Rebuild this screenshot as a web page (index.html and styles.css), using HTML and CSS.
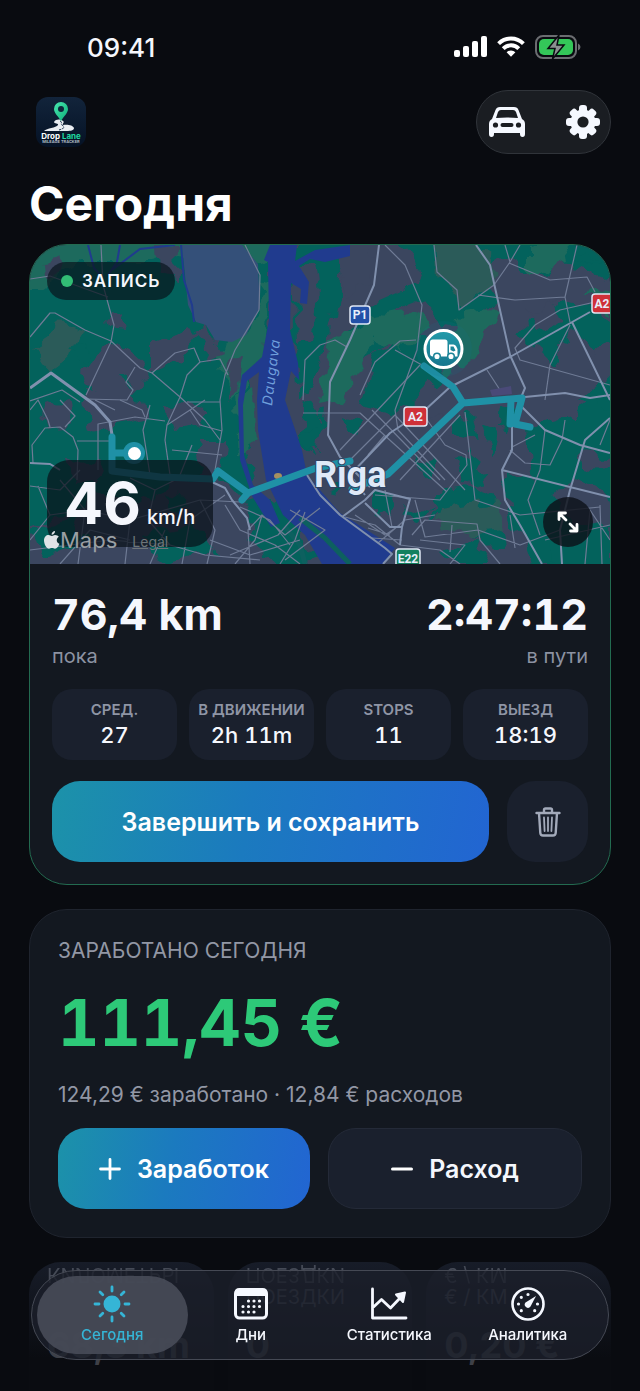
FILE: index.html
```
<!DOCTYPE html>
<html lang="ru">
<head>
    <meta charset="UTF-8">
    <meta name="viewport" content="width=device-width, initial-scale=1">
    <title>Drop Lane</title>
    <link rel="stylesheet" href="styles.css">
</head>
<body>
<div class="page">
    <!-- status bar -->
    <div class="status">
        <span class="status-time">09:41</span>
        <span class="status-icons">
            <svg width="33" height="22" viewBox="0 0 33 22" fill="#fff"><rect x="0" y="14" width="6" height="7" rx="2"/><rect x="9" y="10" width="6" height="11" rx="2"/><rect x="18" y="5" width="6" height="16" rx="2"/><rect x="27" y="0" width="6" height="21" rx="2"/></svg>
            <svg width="28" height="22" viewBox="0 0 28 22"><g fill="none" stroke="#fff" stroke-width="4"><path d="M1.6 7.6a17.6 17.6 0 0 1 24.8 0"/><path d="M6.2 12.6a11 11 0 0 1 15.6 0"/></g><path d="M9.6 16.2a6.3 6.3 0 0 1 8.8 0L14 20.8z" fill="#fff"/></svg>
            <svg width="46" height="24" viewBox="0 0 46 24"><rect x="1" y="1" width="40" height="22" rx="7" fill="none" stroke="#6b6d71" stroke-width="2"/><rect x="4" y="4" width="34" height="16" rx="5" fill="#34c759"/><path d="M43 8.500q2.500 1 2.500 3.500t-2.500 3.500z" fill="#6b6d71"/><path d="M24 0 13 13.500h7L17.500 24 29 10h-7z" fill="#8b8f90" stroke="#090b10" stroke-width="1.500"/></svg>
        </span>
    </div>

    <div class="topbar">
        <svg class="logo" viewBox="0 0 50 50" role="img" aria-label="Drop Lane">
            <defs>
                <linearGradient id="logoBg" x1="0" y1="0" x2="0" y2="1"><stop offset="0" stop-color="#12243b"/><stop offset="1" stop-color="#051225"/></linearGradient>
                <linearGradient id="pin" x1="0" y1="0" x2="1" y2="1"><stop offset="0" stop-color="#49e8b0"/><stop offset="1" stop-color="#0cae78"/></linearGradient>
            </defs>
            <rect width="50" height="50" rx="12" fill="url(#logoBg)"/>
            <path d="M18 25c2-3 6-3 9-1 2 1-1 3 0 4 4-1 10 0 11 3 0 3-5 3-9 3H8c3-3 12-3 14-6 1-2-4-1-4-3z" fill="#e9edf2"/>
            <path d="M24 24c3 1 0 3 2 4 3 2 3 3-3 5" fill="none" stroke="#17304a" stroke-width="1" stroke-dasharray="3 1"/>
            <path d="M25 5a7 7 0 0 1 7 7c0 4-4 7-7 12-3-5-7-8-7-12a7 7 0 0 1 7-7z" fill="url(#pin)"/>
            <circle cx="25" cy="12" r="3" fill="#0f263b"/>
            <text x="25" y="42" class="logo-name">Drop <tspan fill="#1fd7a0">Lane</tspan></text>
            <text x="25" y="46" class="logo-sub">MILEAGE TRACKER</text>
        </svg>
        <div class="top-actions">
            <button type="button" aria-label="Автомобиль">
                <svg width="40" height="32" viewBox="0 0 40 32"><path d="M5 13 8.500 4Q9.500 1 13 1h14q3.500 0 4.500 3L35 13q3 1.500 3 5v10q0 3-2.500 3T33 28v-1H7v1q0 3-2.500 3T2 28V18q0-3.500 3-5z" fill="#f5f8ff"/><path d="M9 12 11 6q.8-2 3-2h12q2.200 0 3 2l2 6q-11-1-22 0z" fill="#1a1d22"/><circle cx="8.500" cy="19" r="2.600" fill="#1a1d22"/><circle cx="31.500" cy="19" r="2.600" fill="#1a1d22"/><rect x="13.500" y="17" width="13" height="4" rx="2" fill="#1a1d22"/></svg>
            </button>
            <button type="button" aria-label="Настройки">
                <svg width="34" height="34" viewBox="-17 -17 34 34"><g fill="#f5f8ff"><circle r="12.500"/><rect x="-4" y="-17" width="8" height="34" rx="3"/><rect x="-17" y="-4" width="34" height="8" rx="3"/><g transform="rotate(45)"><rect x="-4" y="-16.500" width="8" height="33" rx="3"/><rect x="-16.500" y="-4" width="33" height="8" rx="3"/></g></g><circle r="5.600" fill="#1a1d22"/></svg>
            </button>
        </div>
    </div>

    <h1 class="title">Сегодня</h1>

    <!-- current trip -->
    <section class="card trip">
        <div class="map">
            <svg class="map-canvas" viewBox="30 245 580 319" preserveAspectRatio="xMidYMid slice">
                <defs>
                    <filter id="rough" x="-5%" y="-5%" width="110%" height="110%" color-interpolation-filters="sRGB"><feTurbulence type="fractalNoise" baseFrequency="0.06" numOctaves="2" seed="4"/><feDisplacementMap in="SourceGraphic" scale="24" xChannelSelector="R" yChannelSelector="G"/></filter>
                    <linearGradient id="badge" x1="0" y1="0" x2="0" y2="1"><stop offset="0" stop-color="#239baa"/><stop offset="1" stop-color="#17748c"/></linearGradient>
                </defs>
                <rect x="30" y="245" width="580" height="319" fill="#3b465f"/>

                <!-- parks and woods -->
                <g filter="url(#rough)">
                    <path fill="#03625c" d="M10 225H276L270 330 262 350 250 375 245 430 255 480 240 500 210 470 170 485 140 505 100 490 60 520 10 530z"/>
                    <path fill="#03625c" d="M293 225H345L338 300 328 345 312 380 300 400 294 340zM385 225H635V262L600 280 590 268 560 262 540 278 515 262 500 252 480 268 495 300 470 330 440 322 420 300 395 310 380 350 345 370 330 362 350 325 375 302 420 282 415 262z"/>
                    <path fill="#03625c" d="M378 352 420 330 445 372 410 405 395 412 360 405zM560 300 600 310 615 340 590 350 575 330 540 352 515 335zM575 415 615 380V500L580 480 545 500 530 470 525 430zM500 470 545 485 570 520 575 564H530L515 520z"/>
                    <path fill="#03625c" d="M455 455 475 450 485 490 465 480zM410 455 440 465 430 480zM340 420 365 425 355 438zM435 490 470 485 500 505 505 550 480 545 460 515 430 520zM305 400 320 420 312 450 300 440zM375 495 395 490 392 518 375 510z"/>
                    <path fill="#03625c" d="M402 505 430 512 415 525zM550 535 610 520V580H555zM445 552 475 540 490 564H455zM300 440 325 410 320 450zM245 500 275 495 320 560 280 575 255 540zM30 530 70 520 85 540 40 560zM140 535 200 525 215 550 160 562zM450 420 470 415 475 440 455 435z"/>
                    <path fill="#1d6a5d" d="M20 235H275L276 256 252 262 180 255 150 262 80 262 40 290 20 290zM263 280 270 285 264 365 230 400 215 355 250 330zM330 340 370 318 410 310 430 325 400 350 375 340 345 400 320 405zM530 245 565 240 570 262 530 275zM455 315 500 310 485 330 475 360 440 380zM236 395 255 385 260 440 240 455zM585 295 610 285V315z"/>
                    <path fill="#2b5b59" d="M434 240 475 240 492 265 494 285 460 310 455 290 436 272zM32 350 62 325 85 330 75 350 48 370zM440 510 500 500 505 530 470 535 435 525z"/>
                    <path fill="#3b465f" d="M156 245H178L177 278 160 275zM45 265 58 258 62 275 46 278zM150 345 185 330 200 335 178 360 150 370zM195 330 205 325 222 355 210 360zM105 312 122 308 125 330 108 328zM92 355 118 342 152 372 125 400 90 395 82 372zM228 360 243 355 240 385 225 400zM40 405 70 400 75 425 50 430zM84 395 145 400 150 420 90 430zM165 405 205 408 205 425 170 430zM195 440 225 440 220 470 205 475zM70 460 105 455 100 480 75 482z"/>
                    <path fill="#3b465f" d="M295 270 315 262 320 300 310 335 298 345zM335 245 372 245 370 285 345 300zM430 418 460 415 450 440zM530 310 552 300 560 325 540 330zM590 350 610 350V372H592zM580 450 610 455 605 470 582 468z"/>
                    <path fill="#03625c" d="M70 350 90 345 85 360zM120 378 133 376 128 390zM500 405 515 410 512 430 498 425zM482 425 495 430 490 460zM545 330 562 345 555 365 540 350zM575 400 600 380 610 405zM575 260 590 250 600 265zM330 482 345 480 340 495zM60 495 95 490 88 510 62 512zM165 495 190 500 180 515z"/>
                </g>

                <!-- water -->
                <path d="M182 245H242L258 264 260 308 246 335 232 342 215 340 206 325 196 322 188 305z" fill="#345079"/>
                <path d="M181 245 184 280 192 305 194 322M88 245 94 268 103 278M120 245 117 262 108 275M175 245 140 249 112 270" fill="none" stroke="#203b8e" stroke-width="2"/>
                <path d="M270 245H297L295 261 315 250 350 245V256L325 262 310 259 299 266 309 282 307 304 300 303 301 289 291 283 290 330 298 363 299 380 291 371 285 400 302 450 307 475 340 513 395 548 383 564H322L305 535 283 515 266 480 258 430 257 400 259 372 247 381 243 405 244 455 253 485 270 500 280 523 271 527 252 496 240 460 238 400 242 375 262 357 269 320 268 262 264 260z" fill="#203b8e"/>
                <path d="M300 518 325 538 350 564M285 527 300 545 305 564" fill="none" stroke="#0d605f" stroke-width="5"/>
                <ellipse cx="278" cy="476" rx="4" ry="3" fill="#a58f60"/>

                <!-- streets -->
                <g fill="none" stroke="#6f7b95" stroke-width="1.200" stroke-linejoin="round">
                    <path d="M30 279 50 276 108 297M101 245 103 285 114 325 111 342 86 395M30 337 50 313 55 313 85 330 111 341 140 368 152 373 180 397 205 420 220 440M152 373 175 353 194 348 200 362 220 359 228 375M135 367 126 382 133 390 127 400 85 399M245 245 260 275 259 310 235 350 225 375 220 400 222 430 215 470M200 362 187 375 180 397 167 425 165 440 170 475M187 402H220"/>
                    <path d="M30 410 38 400 48 420 50 427M33 463 32 445 45 428 60 427 73 437 78 450 77 480M77 441H110M60 400 75 416 65 427M98 470V424L135 417 165 421M30 401 62 390 80 402M95 400 115 410M120 400 142 410 145 417M167 425 190 410 205 400M190 410 200 425 222 431M172 450 222 455M180 475 192 445M150 405 143 430 150 475"/>
                    <path d="M30 486 60 490 80 470M38 486 50 515 30 540M60 480 85 510 130 520 200 500 240 502M85 510 78 564M50 515 85 510M130 520 125 564M130 478 155 490 185 475M155 490 148 520 170 545 205 555 260 560M200 500 215 530 207 564M30 550 110 540 170 545M60 564 90 530 130 540M182 564 190 520 225 495M150 564 165 530"/>
                    <path d="M225 505 240 530 275 545 300 564M240 507 270 520 290 545M250 564 248 530 262 515 285 535 320 508M300 510 278 535 230 555M305 512 295 540 280 564M210 540 250 555 300 540M262 515 255 540 235 564M290 510 325 530 285 560"/>
                    <path d="M385 245 405 265 422 305 417 350 395 410M434 245 437 272 457 290 459 310 494 285 510 262 520 245M505 245 510 262M478 295 515 300 565 297 577 245M509 263 550 280 587 277 595 292M565 297 570 322M595 302 560 310 535 325 515 348 520 360 610 385M570 325 550 365 545 400M320 345 335 340 347 347M416 340 400 341 375 362 360 395M395 350 422 365M487 370 500 390M303 400 305 360 320 345"/>
                    <path d="M303 413H360L447 492M340 450 420 365M345 465 395 415 465 490M372 410 440 480M385 435 368 455M395 410 398 430 445 480M400 480 460 415M420 410 445 445 466 455 467 465 440 500 375 495M465 412 475 500 520 515 600 507M510 450 525 463 550 465 562 440 565 420M512 447 535 435M545 430 540 470 528 500 540 535M600 445 610 420"/>
                    <path d="M385 490 392 527M415 500 425 537 478 530 520 545 560 530M412 535 425 520 477 524 480 540 500 564M345 517 375 525 400 545 440 550 460 564M355 515 385 535 400 525M368 528 390 535M372 538 402 540M378 543 405 520 435 515M452 525 450 552M420 540 465 545 450 564M585 564 590 510 610 540M600 505 602 564M545 540 610 525M510 515 515 548"/>
                </g>
                <g fill="none" stroke="#8090ad" stroke-width="2" stroke-linejoin="round">
                    <path d="M379 245 374 285 350 340 330 382 328 435 340 457 370 487M590 312 510 357 450 387 425 410 390 433 350 475M476 245 490 265 510 355 525 388 520 400M525 397 565 393 590 398 610 395M572 322 610 400M520 405 545 430 580 445 610 453M610 418 585 440 570 490 560 530 562 564M512 420V450L502 470 505 500 520 525 542 564M502 470 610 497"/>
                    <path d="M307 475 320 495 340 515 385 548 392 554 383 564M342 517 365 500 375 490 410 499 402 527 400 545M365 503 390 527H402M30 463 50 464 60 470M212 482 225 488 232 500 247 518 250 530M350 475 365 495"/>
                    <path d="M30 388 51 373 95 405 110 422 112 435" stroke-width="3"/>
                </g>
                <path d="M490 390 511 386 512 394 492 396z" fill="#4a4a78"/>

                <!-- route -->
                <path d="M134 453H112V437M112 453V471L160 477 213 479 218 471 248 493 242 500M248 493 316 468 350 461M352 489 388 474 463 403 522 398 515 424 530 427M511 400 510 424M463 403 453 387 424 366" fill="none" stroke="#1f91a6" stroke-width="7" stroke-linecap="round" stroke-linejoin="round"/>
                <circle cx="134" cy="453" r="11" fill="#1f91a6"/><circle cx="134.500" cy="453.500" r="6.500" fill="#fff"/>

                <!-- road signs -->
                <g stroke="#dfe7f5" stroke-width="1.500">
                    <rect x="350" y="306" width="20" height="18" rx="3" fill="#2350a8"/>
                    <rect x="592" y="294" width="26" height="19" rx="3" fill="#cf3038"/>
                    <rect x="404" y="407" width="23" height="19" rx="3" fill="#cf3038"/>
                    <rect x="396" y="549" width="24" height="19" rx="3" fill="#14805f"/>
                </g>
                <g class="sign"><text x="360" y="319">P1</text><text x="602" y="308">A2</text><text x="415.500" y="421">A2</text><text x="408" y="563">E22</text></g>
                <text class="river" transform="translate(272 406) rotate(-83)">Daugava</text>
                <text class="city" x="314" y="487">Riga</text>

                <!-- truck -->
                <circle cx="444" cy="349" r="28" fill="#17748c" opacity=".15"/>
                <circle cx="443.500" cy="349" r="18.500" fill="url(#badge)" stroke="#fff" stroke-width="3"/>
                <path d="M430 342q0-2.500 2.500-2.500H445q2.500 0 2.500 2.500v14.500H433q-3 0-3-3zM449 344.500h4.500q1.500 0 2.500 1.500l1.500 3v7.500H449z" fill="#fff"/>
                <path d="M450.500 346.500h3l2 4-2 1-3-1.500z" fill="#1c8599"/>
                <circle cx="437" cy="356.500" r="3.300" fill="#fff" stroke="#1c8599" stroke-width="1.500"/><circle cx="451" cy="356.500" r="3.300" fill="#fff" stroke="#1c8599" stroke-width="1.500"/>
            </svg>
            <div class="rec"><i></i>ЗАПИСЬ</div>
            <div class="speed"><b>46</b><span>km/h</span></div>
            <div class="credit">
                <svg width="16" height="18" viewBox="0 0 16 18"><path d="M11 4c1.800 0 3 .8 3.800 1.800-3 1.800-2.600 5.800.6 7-1 2.600-2.600 5-4.400 5-1.200 0-1.600-.7-3-.7s-1.900.7-3 .7C2.500 17.800 0 13 0 9.500 0 6 2.200 4 4.500 4c1.400 0 2.500.9 3.400.9S9.700 4 11 4zM11 0c.2 2-1.500 3.800-3.400 3.700C7.400 1.800 9.200.1 11 0z" fill="#dfe3e6"/></svg><span>Maps</span><a href="#legal">Legal</a>
            </div>
            <button class="expand" type="button" aria-label="Развернуть карту">
                <svg width="22" height="22" viewBox="0 0 22 22" fill="none" stroke="#fff" stroke-width="2.800" stroke-linecap="round" stroke-linejoin="round"><path d="M2 8.500V2h6.500M2.500 2.500 9 9M20 13.500V20h-6.500M19.500 19.500 13 13"/></svg>
            </button>
        </div>
        <div class="trip-body">
            <div class="totals">
                <div><strong>76,4 km</strong><span>пока</span></div>
                <div class="right"><strong>2:47:12</strong><span>в пути</span></div>
            </div>
            <div class="chips">
                <div class="chip"><span>СРЕД.</span><b>27</b></div>
                <div class="chip"><span>В ДВИЖЕНИИ</span><b>2h 11m</b></div>
                <div class="chip"><span>STOPS</span><b>11</b></div>
                <div class="chip"><span>ВЫЕЗД</span><b>18:19</b></div>
            </div>
            <div class="actions">
                <button class="btn btn-primary" type="button">Завершить и сохранить</button>
                <button class="btn btn-trash" type="button" aria-label="Удалить">
                    <svg width="26" height="30" viewBox="0 0 26 30" fill="none" stroke="#a3aaba" stroke-width="2.400" stroke-linecap="round" stroke-linejoin="round"><path d="M1.500 6h23M9 6V3q0-1.500 1.500-1.500h5Q17 1.500 17 3v3M4 6l1.300 20q.2 2.500 2.700 2.500h10q2.500 0 2.700-2.500L22 6"/><path d="M9 10.500 9.600 24M13 10.500V24M17 10.500 16.400 24" stroke-width="1.800"/></svg>
                </button>
            </div>
        </div>
    </section>

    <!-- money -->
    <section class="card earn">
        <h2>ЗАРАБОТАНО СЕГОДНЯ</h2>
        <p class="amount">111,45 €</p>
        <p class="detail">124,29 € заработано · 12,84 € расходов</p>
        <div class="earn-actions">
            <button class="btn btn-primary" type="button"><svg width="22" height="22" viewBox="0 0 22 22" stroke="#fff" stroke-width="2.800" stroke-linecap="round"><path d="M11 1.500v19M1.500 11h19"/></svg>Заработок</button>
            <button class="btn btn-dark" type="button"><svg width="22" height="22" viewBox="0 0 22 22" stroke="#fff" stroke-width="3" stroke-linecap="round"><path d="M1.500 11h19"/></svg>Расход</button>
        </div>
    </section>

    <div class="tiles">
        <div class="tile"><span class="mirror" aria-hidden="true">КИЛОМЕТРЫ</span><b>68,3 km</b></div>
        <div class="tile"><span class="mirror" aria-hidden="true">ПОЕЗДКИ</span><span>ПОЕЗДКИ</span><b>0</b></div>
        <div class="tile"><span class="mirror" aria-hidden="true">€ / КМ</span><span>€ / КМ</span><b>0,20 €</b></div>
    </div>
</div>

<nav class="tabbar">
    <a class="tab active" href="#today">
        <svg width="38" height="38" viewBox="-19 -19 38 38"><circle r="8.500" fill="#35b5d6"/><path d="M0-17v4M0 17v-4M-17 0h4M17 0h-4M-12-12l2.800 2.800M12 12 9.200 9.200M-12 12l2.800-2.800M12-12 9.200-9.200" stroke="#35b5d6" stroke-width="2.800" stroke-linecap="round"/></svg>
        <span>Сегодня</span>
    </a>
    <a class="tab" href="#days">
        <svg width="38" height="38" viewBox="0 0 38 38"><rect x="3.500" y="5" width="31" height="28" rx="4" fill="none" stroke="#f5f8ff" stroke-width="3"/><path d="M2.500 11V8q0-5 5-5h23q5 0 5 5v3z" fill="#f5f8ff"/><path d="M16.500 16h0M22 16h0M27.500 16h0M11 21.500h0M16.500 21.500h0M22 21.500h0M27.500 21.500h0M11 27h0M16.500 27h0M22 27h0" stroke="#f5f8ff" stroke-width="3.200" stroke-linecap="round"/></svg>
        <span>Дни</span>
    </a>
    <a class="tab" href="#stats">
        <svg width="38" height="38" viewBox="0 0 38 38" fill="none" stroke="#f5f8ff" stroke-width="2.800" stroke-linecap="round" stroke-linejoin="round"><path d="M2.500 4v29H36M3.500 22l8-7.500 9 8.500L31 12"/><path d="M26 9.500 35 7.500 33 17z" fill="#f5f8ff" stroke-width="2"/></svg>
        <span>Статистика</span>
    </a>
    <a class="tab" href="#analytics">
        <svg width="38" height="38" viewBox="-19 -19 38 38"><circle r="15.500" fill="none" stroke="#f5f8ff" stroke-width="2.600"/><path d="M0-9.500h0M-6.700-6.700h0M-9.500 0h0M9.500 0h0M-6.700 6.700h0M6.700 6.700h0" stroke="#f5f8ff" stroke-width="3.200" stroke-linecap="round"/><path d="M8-8 2.500 2.500A3.200 3.200 0 1 1-2.500-1.500z" fill="#f5f8ff"/></svg>
        <span>Аналитика</span>
    </a>
</nav>
</body>
</html>
```
FILE: styles.css
```
* {
    box-sizing: border-box;
}
body {
    margin: 0;
    background: #090b10;
    color: #f5f7fd;
    font-family: Inter, "Liberation Sans", sans-serif;
    font-size: 20px;
}
h1, h2, p {
    margin: 0;
}
button {
    border: 0;
    padding: 0;
    background: none;
    color: inherit;
    font-family: inherit;
    cursor: pointer;
}
svg {
    display: block;
    flex: none;
}
.page {
    padding: 0 29px;
}

/* status bar */
.status {
    display: flex;
    justify-content: space-between;
    align-items: center;
    height: 90px;
    padding: 4px 30px 0 58px;
}
.status-time {
    font-size: 26px;
    font-weight: 500;
}
.status-icons {
    display: flex;
    align-items: center;
    gap: 10px;
}

/* top bar */
.topbar {
    display: flex;
    justify-content: space-between;
    align-items: center;
    padding-left: 7px;
}
.logo {
    width: 50px;
    height: 50px;
}
.logo-name {
    font-size: 8px;
    font-weight: 700;
    text-anchor: middle;
    fill: #fff;
}
.logo-sub {
    font-size: 4px;
    font-weight: 600;
    text-anchor: middle;
    fill: #b9c3cf;
}
.top-actions {
    display: flex;
    justify-content: space-between;
    align-items: center;
    width: 135px;
    height: 64px;
    padding: 0 10px;
    border: 1px solid #30343a;
    border-radius: 32px;
    background: #1a1d22;
}
.title {
    margin-top: 21px;
    font-size: 48px;
    line-height: 58px;
    font-weight: 700;
    color: #fff;
}

/* cards */
.card {
    border: 1px solid #1f242e;
    border-radius: 38px;
    background: #131820;
    overflow: hidden;
}
.trip {
    margin-top: 11px;
    border-color: #236b50;
}
.map {
    position: relative;
    height: 319px;
}
.map-canvas {
    width: 100%;
    height: 100%;
}
.sign {
    font-size: 12px;
    font-weight: 700;
    font-family: Roboto, sans-serif;
    text-anchor: middle;
    fill: #e8eefa;
}
.river {
    font-size: 14px;
    font-style: italic;
    letter-spacing: 1px;
    fill: #6f9fdc;
}
.city {
    font: 700 36px Roboto, sans-serif;
    fill: #dfe9f8;
    stroke: #2f4262;
    stroke-width: 2px;
    paint-order: stroke;
}
.rec {
    position: absolute;
    left: 17px;
    top: 17px;
    display: flex;
    align-items: center;
    gap: 9px;
    height: 38px;
    padding: 0 15px 0 14px;
    border-radius: 19px;
    background: rgba(9, 20, 28, .7);
    font-size: 17px;
    font-weight: 600;
    letter-spacing: 1px;
}
.rec i {
    width: 12px;
    height: 12px;
    border-radius: 50%;
    background: #32bd75;
}
.speed {
    position: absolute;
    left: 17px;
    top: 215px;
    display: flex;
    align-items: baseline;
    gap: 6px;
    height: 87px;
    padding: 0 18px 0 17px;
    border-radius: 22px;
    background: rgba(9, 16, 24, .7);
    line-height: 87px;
}
.speed b {
    font-size: 58px;
    font-weight: 700;
}
.speed span {
    font-weight: 500;
}
.credit {
    position: absolute;
    left: 14px;
    bottom: 10px;
    display: flex;
    align-items: center;
    color: #9a9fa4;
    font-size: 22px;
    line-height: 28px;
}
.credit a {
    margin-left: 15px;
    padding-top: 4px;
    font-size: 14px;
    line-height: 20px;
    color: #6d7579;
}
.expand {
    position: absolute;
    right: 17px;
    bottom: 17px;
    display: flex;
    align-items: center;
    justify-content: center;
    width: 50px;
    height: 50px;
    border-radius: 50%;
    background: rgba(12, 16, 24, .8);
}
.trip-body {
    padding: 25px 22px 22px;
}
.totals {
    display: flex;
    justify-content: space-between;
    color: #8c92a2;
    line-height: 28px;
}
.totals strong {
    display: block;
    margin-bottom: 3px;
    font-size: 43px;
    line-height: 50px;
    font-weight: 700;
    font-variant-numeric: tabular-nums;
    color: #f5f7fd;
}
.right {
    text-align: right;
}
.chips {
    display: grid;
    grid-template-columns: repeat(4, 1fr);
    gap: 12px;
    margin-top: 19px;
}
.chip {
    height: 71px;
    padding-top: 11px;
    border-radius: 20px;
    background: #1a202d;
    text-align: center;
    white-space: nowrap;
}
.chip span {
    display: block;
    font-size: 15px;
    line-height: 20px;
    font-weight: 600;
    color: #8f95a5;
}
.chip b {
    display: block;
    font-size: 22px;
    line-height: 30px;
    font-weight: 500;
    font-variant-numeric: tabular-nums;
}
.actions {
    display: flex;
    gap: 18px;
    margin-top: 21px;
}
.btn {
    display: flex;
    align-items: center;
    justify-content: center;
    gap: 16px;
    height: 81px;
    border-radius: 28px;
    font-size: 25px;
    font-weight: 600;
}
.btn-primary {
    flex: 1;
    background: linear-gradient(100deg, #1c92a9, #1b7abf 45%, #2265d2);
    color: #fff;
}
.btn-trash {
    width: 81px;
    background: #1a202d;
}
.btn-dark {
    flex: 1;
    border: 1px solid #242a38;
    background: #1a202d;
}

/* earnings */
.earn {
    margin-top: 24px;
    padding: 26px 28px 28px;
}
.earn h2 {
    font-size: 21px;
    line-height: 30px;
    font-weight: 400;
    color: #9297a5;
}
.amount {
    margin-top: 19px;
    font-size: 64px;
    line-height: 76px;
    font-weight: 700;
    font-variant-numeric: tabular-nums;
    color: #2dc978;
}
.detail {
    margin-top: 20px;
    font-size: 21px;
    line-height: 28px;
    color: #9297a5;
}
.earn-actions {
    display: flex;
    gap: 18px;
    margin-top: 19px;
}

/* tiles under the tab bar */
.tiles {
    display: grid;
    grid-template-columns: repeat(3, 1fr);
    gap: 14px;
    margin-top: 24px;
}
.tile {
    display: flex;
    flex-direction: column;
    height: 128px;
    padding: 2px 18px 0;
    border-radius: 32px 32px 0 0;
    background: linear-gradient(#171c28, #0a0c11 75%);
    color: #454a56;
    font-size: 20px;
    line-height: 22px;
    overflow: hidden;
}
.tile b {
    margin-top: auto;
    padding-bottom: 23px;
    font-size: 36px;
    line-height: 44px;
    color: #3e4047;
}
.mirror {
    transform: scaleY(-1);
}

.tabbar {
    position: fixed;
    left: 31px;
    right: 31px;
    bottom: 31px;
    display: grid;
    grid-template-columns: repeat(4, 1fr);
    height: 90px;
    padding: 5px 11px;
    border: 1px solid #454954;
    border-radius: 45px;
    background: rgba(27, 31, 43, .8);
}
.tab {
    display: flex;
    flex-direction: column;
    align-items: center;
    padding-top: 9px;
    color: #f5f7fd;
    font-size: 15px;
    line-height: 24px;
    font-weight: 500;
    text-decoration: none;
}
.tab.active {
    margin: 0 -6px;
    border-radius: 40px;
    background: rgba(74, 77, 90, .88);
    color: #35b5d6;
}
```
